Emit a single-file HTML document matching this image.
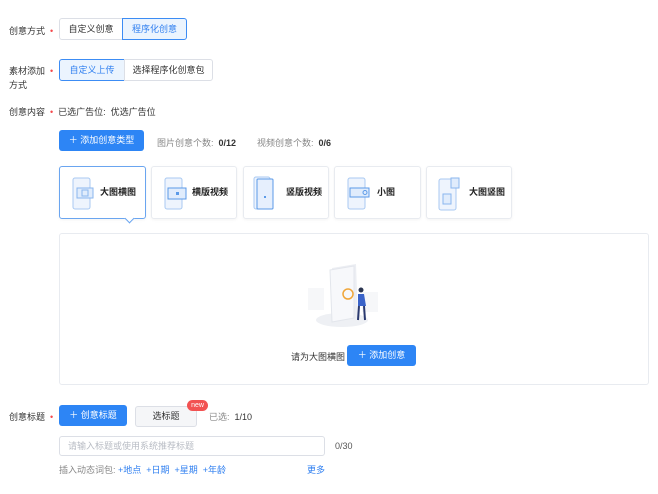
<!DOCTYPE html>
<html><head><meta charset="utf-8"><style>
*{box-sizing:border-box;margin:0;padding:0}
body{width:658px;height:494px;background:#fff;font-family:"Liberation Sans","Noto Sans CJK SC",sans-serif;font-size:9px;color:#333;position:relative;overflow:hidden}
.a{position:absolute;white-space:nowrap}
.lbl{color:#333}
.star{color:#f5484b}
.btn{position:absolute;border:1px solid #dcdfe6;background:#fff;text-align:center;color:#333}
.sel{background:#ebf4fe;border-color:#3c8cf4;color:#2f7ff0}
.pri{position:absolute;background:#2d85f5;color:#fff;border-radius:3px;text-align:center}
.card{position:absolute;top:166px;height:53px;border:1px solid #e8ebf0;border-radius:3px;background:#fff;box-shadow:0 1px 3px rgba(0,0,0,.05)}
.card span{position:absolute;top:18px;font-size:9px;color:#222;font-weight:bold}
.gray{color:#888}
.link{color:#2f7ff0}
</style></head><body>
<div class="a lbl" style="left:9px;top:24px">创意方式 &nbsp;<span class="star">•</span></div>
<div class="btn" style="left:59px;top:18px;width:64px;height:22px;line-height:20px;border-radius:3px 0 0 3px">自定义创意</div>
<div class="btn sel" style="left:122px;top:18px;width:65px;height:22px;line-height:20px;border-radius:0 3px 3px 0">程序化创意</div>

<div class="a lbl" style="left:9px;top:64px">素材添加 &nbsp;<span class="star">•</span></div>
<div class="a lbl" style="left:9px;top:78px">方式</div>
<div class="btn sel" style="left:59px;top:59px;width:66px;height:22px;line-height:20px;border-radius:3px 0 0 3px">自定义上传</div>
<div class="btn" style="left:124px;top:59px;width:89px;height:22px;line-height:20px;border-radius:0 3px 3px 0">选择程序化创意包</div>

<div class="a lbl" style="left:9px;top:105px">创意内容 &nbsp;<span class="star">•</span>&nbsp; 已选广告位: &nbsp;优选广告位</div>

<div class="pri" style="left:59px;top:130px;width:85px;height:21px;line-height:21px">＋ 添加创意类型</div>
<div class="a gray" style="left:157px;top:136px">图片创意个数: &nbsp;<b style="color:#333">0/12</b></div>
<div class="a gray" style="left:257px;top:136px">视频创意个数: &nbsp;<b style="color:#333">0/6</b></div>

<div class="card" style="left:59px;width:87px;border-color:#6aa5f0"><svg class="a" style="left:10px;top:10px" width="28" height="33"><rect x="3" y="1" width="17" height="31" rx="2" fill="#eef4fd" stroke="#a9c9f2"/><rect x="7" y="11" width="16" height="10" fill="#e0ecfc" stroke="#8ab6ee"/><rect x="12" y="13" width="6" height="6" fill="none" stroke="#8ab6ee"/></svg><span style="left:40px">大图横图</span></div>
<div style="position:absolute;left:126px;top:215px;width:7px;height:7px;background:#fff;border-right:1px solid #6aa5f0;border-bottom:1px solid #6aa5f0;transform:rotate(45deg)"></div>
<div class="card" style="left:151px;width:86px"><svg class="a" style="left:10px;top:10px" width="28" height="33"><rect x="3" y="1" width="17" height="31" rx="2" fill="#eef4fd" stroke="#a9c9f2"/><rect x="6" y="11" width="18" height="11" fill="#e0ecfc" stroke="#5b9ae8"/><rect x="14" y="15" width="3" height="3" fill="#5b9ae8"/></svg><span style="left:40px">横版视频</span></div>
<div class="card" style="left:243px;width:86px"><svg class="a" style="left:8px;top:9px" width="28" height="35"><rect x="2" y="1" width="16" height="32" rx="2" fill="#eef4fd" stroke="#a9c9f2"/><rect x="5" y="3" width="16" height="30" rx="1" fill="#e6effd" stroke="#5b9ae8"/><rect x="12" y="20" width="2" height="2" fill="#5b9ae8"/></svg><span style="left:42px">竖版视频</span></div>
<div class="card" style="left:334px;width:87px"><svg class="a" style="left:10px;top:10px" width="28" height="33"><rect x="3" y="1" width="17" height="31" rx="2" fill="#eef4fd" stroke="#a9c9f2"/><rect x="5" y="11" width="19" height="9" fill="#e0ecfc" stroke="#5b9ae8"/><circle cx="20" cy="15.5" r="2" fill="none" stroke="#5b9ae8"/></svg><span style="left:42px">小图</span></div>
<div class="card" style="left:426px;width:86px"><svg class="a" style="left:10px;top:9px" width="28" height="35"><rect x="2" y="3" width="17" height="31" rx="2" fill="#eef4fd" stroke="#a9c9f2"/><rect x="6" y="18" width="8" height="10" fill="#e0ecfc" stroke="#8ab6ee"/><rect x="14" y="2" width="8" height="10" fill="#e0ecfc" stroke="#8ab6ee"/></svg><span style="left:42px">大图竖图</span></div>

<div style="position:absolute;left:59px;top:233px;width:590px;height:152px;border:1px solid #e8ebf0;border-radius:3px"></div>
<svg class="a" style="left:300px;top:258px" width="85" height="75">
<ellipse cx="42" cy="62" rx="26" ry="7" fill="#eef0f4"/>
<rect x="8" y="30" width="16" height="22" fill="#f6f7f9"/><rect x="62" y="34" width="16" height="20" fill="#f6f7f9"/>
<path d="M32 10 L56 6 L58 60 L34 64 Z" fill="#eceef3"/>
<path d="M30 12 L54 8 L54 60 L32 64 Z" fill="#f7f8fb" stroke="#e3e6ec"/>
<circle cx="48" cy="36" r="5" fill="none" stroke="#f0a63a" stroke-width="1.5"/>
<path d="M58 36 L64 36 L66 48 L58 48 Z" fill="#3a63c9"/><circle cx="61" cy="32" r="2.5" fill="#2b3550"/>
<path d="M59 48 L58 62 M64 48 L65 62" stroke="#2b3a70" stroke-width="2"/>
</svg>
<div class="a" style="left:291px;top:350px">请为大图横图</div>
<div class="pri" style="left:347px;top:345px;width:69px;height:21px;line-height:21px">＋ 添加创意</div>

<div class="a lbl" style="left:9px;top:410px">创意标题 &nbsp;<span class="star">•</span></div>
<div class="pri" style="left:59px;top:405px;width:68px;height:21px;line-height:21px">＋ 创意标题</div>
<div class="btn" style="left:135px;top:406px;width:62px;height:21px;line-height:19px;background:#f5f6f8;border-radius:3px">选标题</div>
<div class="a" style="left:187px;top:400px;width:21px;height:11px;background:#f25252;color:#fff;border-radius:6px;font-size:7px;line-height:11px;text-align:center">new</div>
<div class="a gray" style="left:209px;top:410px">已选: &nbsp;<span style="color:#333">1/10</span></div>

<div style="position:absolute;left:59px;top:436px;width:266px;height:20px;border:1px solid #dcdfe6;border-radius:3px;color:#b8bcc4;padding-left:8px;line-height:18px">请输入标题或使用系统推荐标题</div>
<div class="a" style="left:335px;top:441px;color:#555">0/30</div>
<div class="a gray" style="left:59px;top:463px">插入动态词包: <span class="link">+地点 &nbsp;+日期 &nbsp;+星期 &nbsp;+年龄</span></div>
<div class="a link" style="left:307px;top:463px">更多</div>
</body></html>
